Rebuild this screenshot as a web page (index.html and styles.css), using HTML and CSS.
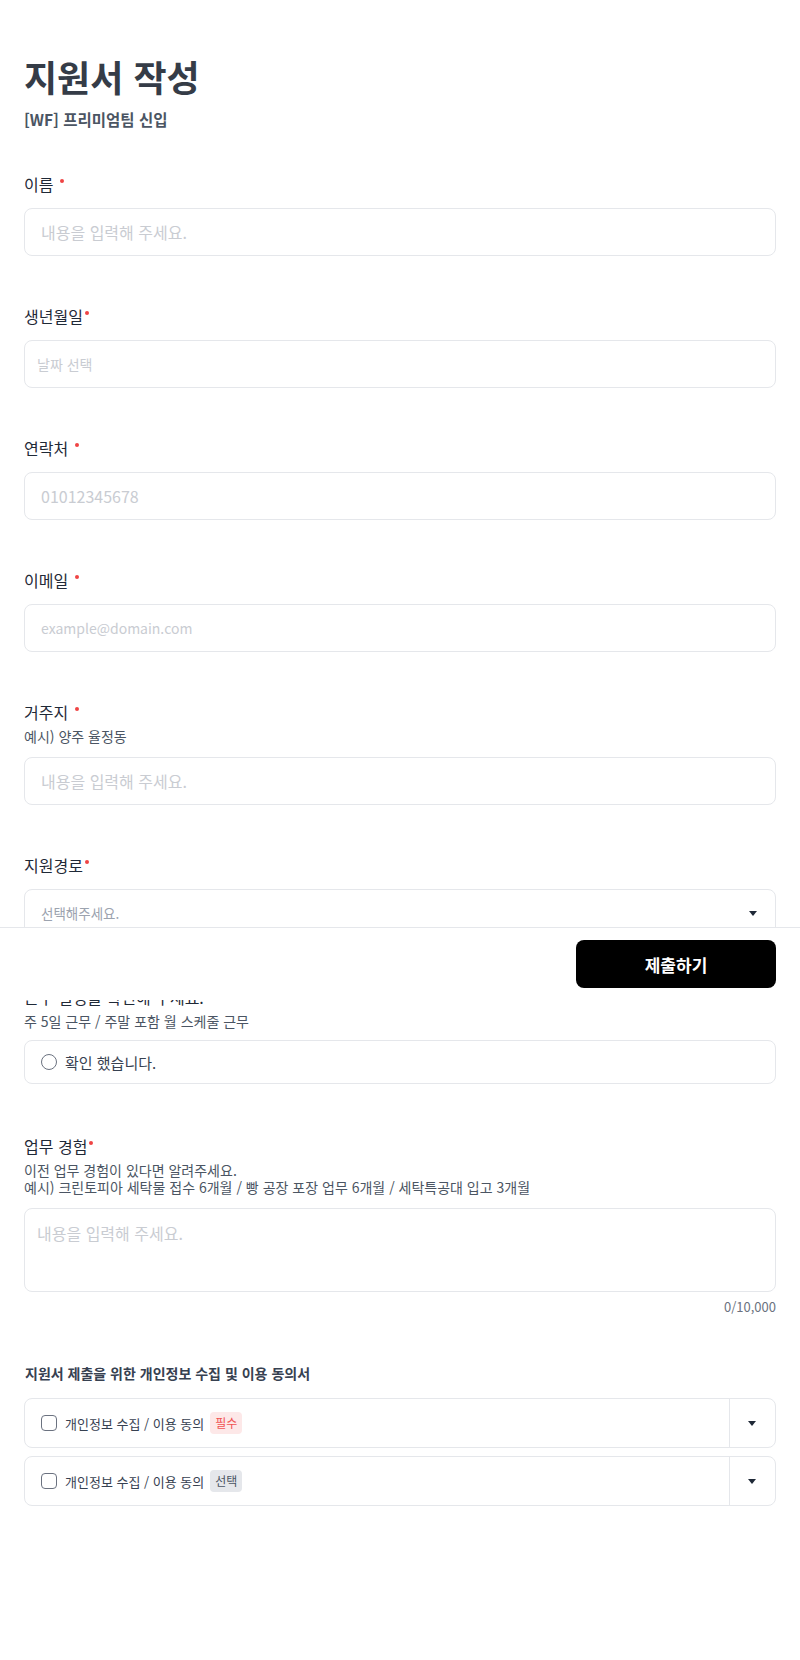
FILE: index.html
```html
<!DOCTYPE html>
<html lang="ko">
<head>
	<meta charset="UTF-8">
	<title>지원서 작성</title>
	<link rel="stylesheet" href="styles.css">
</head>
<body>
	<main class="page">
		<!-- 타이틀 -->
		<header class="head">
			<h1 class="title">지원서 작성</h1>
			<p class="subtitle">[WF] 프리미엄팀 신입</p>
		</header>

		<form class="form">
			<div class="field">
				<label class="label">이름 <i class="req"></i></label>
				<input class="input" type="text" placeholder="내용을 입력해 주세요.">
			</div>
			<div class="field">
				<label class="label">생년월일<i class="req"></i></label>
				<input class="input input-date" type="text" placeholder="날짜 선택">
			</div>
			<div class="field">
				<label class="label">연락처 <i class="req"></i></label>
				<input class="input" type="tel" placeholder="01012345678">
			</div>
			<div class="field">
				<label class="label">이메일 <i class="req"></i></label>
				<input class="input input-email" type="email" placeholder="example@domain.com">
			</div>
			<div class="field">
				<label class="label">거주지 <i class="req"></i></label>
				<p class="desc">예시) 양주 율정동</p>
				<input class="input" type="text" placeholder="내용을 입력해 주세요.">
			</div>
			<div class="field">
				<label class="label">지원경로<i class="req"></i></label>
				<div class="select">
					<span class="select-text">선택해주세요.</span>
					<span class="caret"></span>
				</div>
			</div>
			<div class="field field-choice">
				<label class="label">근무 일정을 확인해 주세요.<i class="req"></i></label>
				<p class="desc">주 5일 근무 / 주말 포함 월 스케줄 근무</p>
				<div class="choice">
					<span class="radio"></span>
					<span>확인 했습니다.</span>
				</div>
			</div>
			<div class="field field-last">
				<label class="label">업무 경험<i class="req"></i></label>
				<p class="desc">이전 업무 경험이 있다면 알려주세요.<br>예시) 크린토피아 세탁물 접수 6개월 / 빵 공장 포장 업무 6개월 / 세탁특공대 입고 3개월</p>
				<textarea class="textarea" placeholder="내용을 입력해 주세요."></textarea>
				<div class="counter">0/10,000</div>
			</div>

			<!-- 동의서 -->
			<section class="agree">
				<h2 class="agree-title">지원서 제출을 위한 개인정보 수집 및 이용 동의서</h2>
				<div class="agree-row">
					<div class="agree-main">
						<span class="check"></span>
						<span>개인정보 수집 / 이용 동의</span>
						<span class="badge badge-req">필수</span>
					</div>
					<div class="agree-toggle"><span class="caret"></span></div>
				</div>
				<div class="agree-row">
					<div class="agree-main">
						<span class="check"></span>
						<span>개인정보 수집 / 이용 동의</span>
						<span class="badge">선택</span>
					</div>
					<div class="agree-toggle"><span class="caret"></span></div>
				</div>
			</section>
		</form>
	</main>

	
	<div class="bottom-bar">
		<button class="submit" type="button">제출하기</button>
	</div>
</body>
</html>
```

FILE: styles.css
```css
*{
	padding: 0;
	margin: 0;
	box-sizing: border-box;
}
body{
	font-family: "Noto Sans CJK KR", "Noto Sans", sans-serif;
	font-size: 16px;
	color: #1f2937;
	background: #fff;
}
/*페이지*/
.page{
	padding: 52px 24px 120px;
}
.head{
	margin-bottom: 41px;
}
.title{
	font-size: 36px;
	line-height: 49px;
	font-weight: 700;
	color: #353c47;
	margin-bottom: 6px;
}
.subtitle{
	font-size: 15.5px;
	line-height: 24px;
	font-weight: 700;
	color: #4b5563;
}
/*필드*/
.field{
	display: flex;
	flex-direction: column;
	margin-bottom: 48px;
}
.label{
	font-size: 16px;
	line-height: 24px;
	color: #1f2937;
	margin-bottom: 12px;
}
.req{
	display: inline-block;
	width: 4px;
	height: 4px;
	border-radius: 50%;
	background: #ef4444;
	margin-left: 2px;
	vertical-align: 8px;
}
.desc{
	font-size: 14px;
	line-height: 17px;
	color: #4b5563;
	margin: -8px 0 12px;
}
.input,
.textarea,
.select,
.choice{
	width: 100%;
	border: 1px solid #e5e7eb;
	border-radius: 8px;
	background: #fff;
	font-family: inherit;
	font-size: 16px;
	color: #1f2937;
}
.input{
	height: 48px;
	padding: 0 16px;
	outline: none;
}
.input-date{
	padding: 0 12px;
	font-size: 14px;
}
.input-email{
	font-size: 14px;
}
.input::placeholder,
.textarea::placeholder{
	color: #c9ccd2;
}
.select{
	height: 48px;
	padding: 0 16px;
	display: flex;
	align-items: center;
	justify-content: space-between;
}
.select-text{
	font-size: 13.5px;
	color: #9ca3af;
}
.caret{
	display: inline-block;
	width: 0;
	height: 0;
	border-left: 4px solid transparent;
	border-right: 4px solid transparent;
	border-top: 5px solid #1f2937;
	margin-right: 2px;
}
.field-choice{
	margin-bottom: 50px;
}
.field-choice .desc{
	margin-bottom: 10px;
}
.choice{
	height: 44px;
	padding: 0 16px;
	display: flex;
	align-items: center;
	gap: 8px;
	font-size: 15px;
	color: #374151;
}
.radio{
	width: 16px;
	height: 16px;
	border: 1px solid #6b7280;
	border-radius: 50%;
}
.textarea{
	height: 84px;
	padding: 12px;
	resize: none;
	outline: none;
}
.counter{
	margin-top: 5px;
	text-align: right;
	font-size: 13px;
	line-height: 20px;
	color: #6b7280;
}
.field-last{
	margin-bottom: 45px;
}
/*동의서*/
.agree-title{
	font-size: 14px;
	line-height: 22px;
	font-weight: 700;
	color: #374151;
	padding-left: 1px;
	margin-bottom: 14px;
}
.agree-row{
	display: flex;
	height: 50px;
	border: 1px solid #e5e7eb;
	border-radius: 8px;
	margin-bottom: 8px;
}
.agree-main{
	flex: 1;
	display: flex;
	align-items: center;
	gap: 8px;
	padding: 0 16px;
	font-size: 13px;
	color: #374151;
}
.check{
	width: 16px;
	height: 16px;
	border: 1px solid #6b7280;
	border-radius: 4px;
}
.badge{
	margin-left: -2px;
	padding: 0 5px;
	height: 22px;
	line-height: 22px;
	border-radius: 4px;
	font-size: 12px;
	background: #e5e7eb;
	color: #4b5563;
}
.badge-req{
	background: #fde8e8;
	color: #f05252;
}
.agree-toggle{
	width: 46px;
	border-left: 1px solid #e5e7eb;
	display: flex;
	align-items: center;
	justify-content: center;
}
/*하단 버튼 바*/
.bottom-bar{
	position: absolute;
	top: 927px;
	left: 0;
	right: 0;
	height: 73px;
	background: #fff;
	border-top: 1px solid #e5e7eb;
	padding: 12px 24px;
	display: flex;
	justify-content: flex-end;
}
.submit{
	width: 200px;
	height: 48px;
	border: none;
	border-radius: 8px;
	background: #000;
	color: #fff;
	font-family: inherit;
	font-size: 17px;
	font-weight: 700;
}
```
